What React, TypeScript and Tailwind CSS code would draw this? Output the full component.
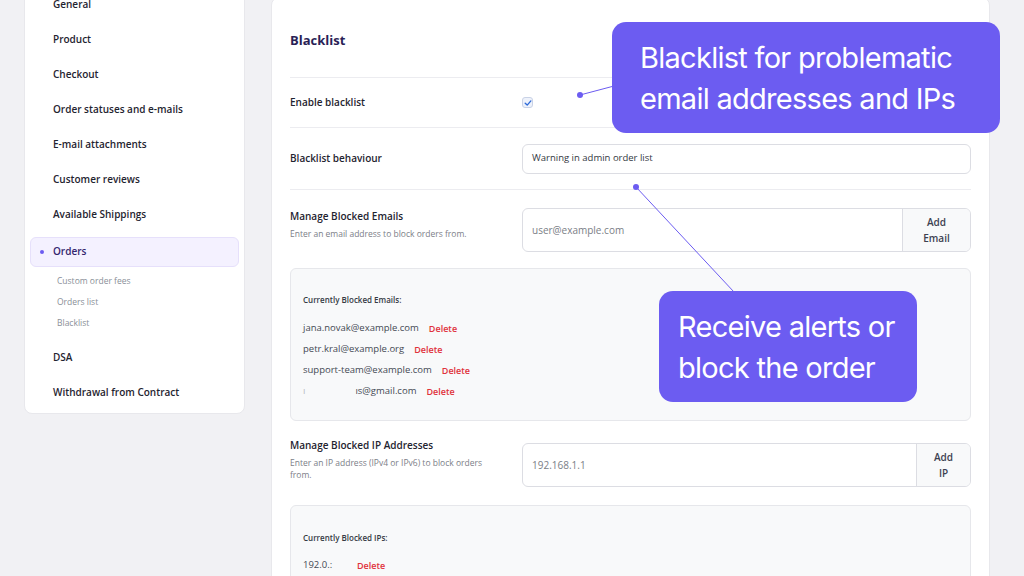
import React from 'react';

// --- sidebar data ---
const navTop = ['General', 'Product', 'Checkout', 'Order statuses and e-mails', 'E-mail attachments', 'Customer reviews', 'Available Shippings'];
const navSub = ['Custom order fees', 'Orders list', 'Blacklist'];
const navBottom = ['DSA', 'Withdrawal from Contract'];

const blockedEmails = ['jana.novak@example.com', 'petr.kral@example.org', 'support-team@example.com'];

const NavItem: React.FC<{ label: string }> = ({ label }) => (
  <div className="h-[35px] flex items-center pl-[23px] text-[10px] font-semibold text-[#1f2430]">{label}</div>
);

const Sidebar = () => (
  <div className="w-[221px] shrink-0 mt-[-19px] bg-white rounded-lg border border-[#e8e8ec] px-[5px] pt-[5px] pb-[3px]">
    {navTop.map((l) => (
      <NavItem key={l} label={l} />
    ))}
    {/* active item */}
    <div className="h-[39px] flex items-center">
      <div className="h-[30px] w-full flex items-center pl-[9px] rounded-md bg-[#f4f1ff] border border-[#e6e0fb]">
        <span className="w-[4px] h-[4px] rounded-full bg-[#6c5cf1]"></span>
        <span className="ml-[9px] text-[10px] font-semibold text-[#33256e]">Orders</span>
      </div>
    </div>
    <div className="mb-[6px]">
      {navSub.map((l) => (
        <div key={l} className="h-[21px] flex items-center pl-[27px] text-[8.5px] text-[#8a8f98]">{l}</div>
      ))}
    </div>
    {navBottom.map((l) => (
      <NavItem key={l} label={l} />
    ))}
  </div>
);

const DeleteLink: React.FC<{ className?: string }> = ({ className }) => (
  <span className={`text-[9px] font-semibold text-[#e0323c] ${className ?? ''}`}>Delete</span>
);

const AddInput: React.FC<{ placeholder: string; btn: string; btnW: string }> = ({ placeholder, btn, btnW }) => (
  <div className="flex-1 h-[44px] flex rounded-md border border-[#dcdde3] bg-white overflow-hidden">
    <div className="flex-1 flex items-center pl-[9px] text-[10px] text-[#7a7e86]">{placeholder}</div>
    <div className={`${btnW} flex flex-col items-center justify-center border-l border-[#dcdde3] bg-[#f8f9fa] text-[10px] font-semibold leading-[16px] text-[#3c4150]`}>
      <span>Add</span>
      <span>{btn}</span>
    </div>
  </div>
);

const MainCard = () => (
  <div className="w-[719px] shrink-0 mt-[-3px] bg-white rounded-lg border border-[#e8e8ec] px-[18px] pb-[40px]">
    <div className="pt-[32px] pb-[27px] text-[13px] leading-[20px] font-bold text-[#2a1f56]">Blacklist</div>

    {/* enable */}
    <div className="h-[50px] flex items-center border-t border-[#ececf0]">
      <div className="w-[232px] text-[10px] font-semibold text-[#1f2430]">Enable blacklist</div>
      <div className="w-[11px] h-[11px] rounded-[3px] border border-[#c9d2e6] bg-[#eef2fb] flex items-center justify-center">
        <svg width="8" height="8" viewBox="0 0 10 10">
          <path d="M1.5 5.2 L4 7.6 L8.6 2.4" fill="none" stroke="#2f6bd8" strokeWidth="1.7" strokeLinecap="round" strokeLinejoin="round" />
        </svg>
      </div>
    </div>

    {/* behaviour */}
    <div className="h-[62px] flex items-center border-t border-[#ececf0]">
      <div className="w-[232px] text-[10px] font-semibold text-[#1f2430]">Blacklist behaviour</div>
      <div className="flex-1 h-[30px] flex items-center pl-[9px] rounded-md border border-[#dcdde3] text-[9.5px] text-[#333842]">
        Warning in admin order list
      </div>
    </div>

    {/* emails */}
    <div className="pt-[18px] flex items-start border-t border-[#ececf0]">
      <div className="w-[232px] pt-[1px]">
        <div className="text-[10px] leading-[14px] font-semibold text-[#1f2430]">Manage Blocked Emails</div>
        <div className="mt-[5px] text-[8.5px] leading-[12px] text-[#7c8088]">Enter an email address to block orders from.</div>
      </div>
      <AddInput placeholder="user@example.com" btn="Email" btnW="w-[68px]" />
    </div>

    <div className="mt-[16px] h-[153px] rounded-md border border-[#e6e7eb] bg-[#f8f9fa] pl-[12px] pt-[25px]">
      <div className="text-[8px] leading-[12px] font-semibold text-[#353a44]">Currently Blocked Emails:</div>
      <div className="mt-[12px]">
        {blockedEmails.map((e) => (
          <div key={e} className="h-[21px] flex items-center text-[9.5px] text-[#444954]">
            <span>{e}</span>
            <DeleteLink className="ml-[10px]" />
          </div>
        ))}
        <div className="h-[21px] flex items-center text-[9.5px] text-[#444954]">
          <span className="text-[#b8bbc2]">ı</span>
          <span className="inline-block w-[50px]"></span>
          <span>ıs@gmail.com</span>
          <DeleteLink className="ml-[10px]" />
        </div>
      </div>
    </div>

    {/* ips */}
    <div className="mt-[22px] flex items-start">
      <div className="w-[232px] mt-[-5px] pr-[30px]">
        <div className="text-[10px] leading-[14px] font-semibold text-[#1f2430]">Manage Blocked IP Addresses</div>
        <div className="mt-[5px] text-[8.5px] leading-[12px] text-[#7c8088]">Enter an IP address (IPv4 or IPv6) to block orders from.</div>
      </div>
      <AddInput placeholder="192.168.1.1" btn="IP" btnW="w-[54px]" />
    </div>

    <div className="mt-[18px] h-[120px] rounded-md border border-[#e6e7eb] bg-[#f8f9fa] pl-[12px] pt-[26px]">
      <div className="text-[8px] leading-[12px] font-semibold text-[#353a44]">Currently Blocked IPs:</div>
      <div className="mt-[11px] h-[21px] flex items-center text-[9.5px] text-[#444954]">
        <span className="w-[54px]">192.0.:</span>
        <DeleteLink />
      </div>
    </div>
  </div>
);

export default function App() {
  return (
    <div className="relative w-[1024px] h-[576px] overflow-hidden bg-[#f1f1f4]" style={{ fontFamily: '"Open Sans", "Noto Sans", sans-serif' }}>
      <div className="flex items-start pl-[24px] gap-[26px]">
        <Sidebar />
        <MainCard />
      </div>

      {/* callout connectors */}
      <svg className="absolute inset-0 pointer-events-none" width="1024" height="576">
        <line x1="580" y1="95" x2="614" y2="86" stroke="#6c5cf1" strokeWidth="1" />
        <circle cx="580" cy="95" r="3" fill="#6c5cf1" />
        <line x1="636" y1="187" x2="734" y2="292" stroke="#6c5cf1" strokeWidth="1" />
        <circle cx="636" cy="187" r="3" fill="#6c5cf1" />
      </svg>

      <div
        className="absolute left-[612px] top-[22px] w-[388px] h-[111px] rounded-[14px] bg-[#6c5cf1] pl-[28px] pt-[15px] text-white text-[29px] leading-[41px] tracking-tight"
        style={{ fontFamily: 'Inter, sans-serif' }}
      >
        <div>Blacklist for problematic</div>
        <div>email addresses and IPs</div>
      </div>
      <div
        className="absolute left-[659px] top-[291px] w-[258px] h-[111px] rounded-[14px] bg-[#6c5cf1] pl-[19px] pt-[15px] text-white text-[29px] leading-[41px] tracking-tight"
        style={{ fontFamily: 'Inter, sans-serif' }}
      >
        <div>Receive alerts or</div>
        <div>block the order</div>
      </div>
    </div>
  );
}
